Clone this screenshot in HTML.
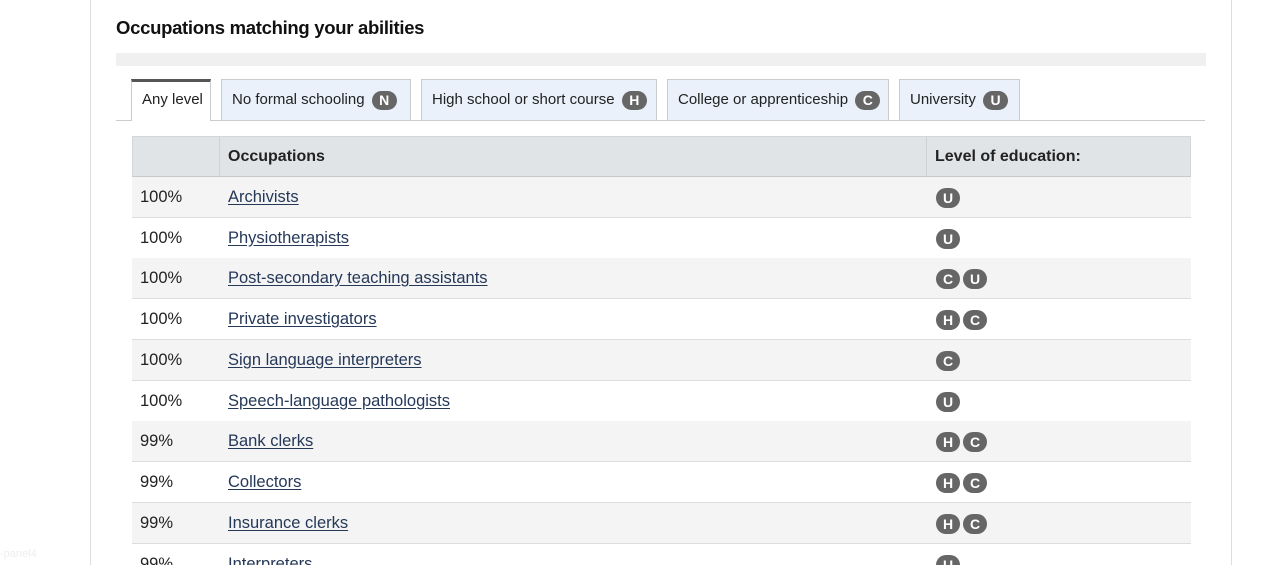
<!DOCTYPE html>
<html><head><meta charset="utf-8"><style>
*{box-sizing:border-box;margin:0;padding:0}
html,body{width:1274px;height:565px;overflow:hidden}
body{background:#fff;font-family:"Liberation Sans",sans-serif;color:#222;position:relative}
.card{position:absolute;left:90px;top:-2px;width:1142px;height:567px;border-left:1px solid #ddd;border-right:1px solid #ddd}
h2{position:absolute;left:116px;top:17px;font-size:18.5px;font-weight:bold;color:#111;letter-spacing:-0.3px}
.bar{position:absolute;left:116px;top:53px;width:1090px;height:13px;background:#f0f0f0}
.tabline{position:absolute;left:116px;top:120px;width:1089px;height:1px;background:#ccc}
.tab{position:absolute;top:79px;height:41px;border:1px solid #ccc;border-bottom:none;background:#eaf1fb;font-size:15px;line-height:40px;padding-left:10px;white-space:nowrap}
.tab.act{background:#fff;border-top:3px solid #555;line-height:36px;height:42px}
.b{display:inline-block;width:25px;height:19px;border-radius:10px;background:#666;color:#fff;font-weight:bold;font-style:normal;font-size:14px;line-height:19px;text-align:center;vertical-align:middle;margin-left:3px}
.thead{position:absolute;left:132px;top:136px;width:1059px;height:41px;background:#e1e4e7;border:1px solid #d4d7da;border-bottom:1px solid #c8c8c8;font-weight:bold;font-size:16px}
.thead div{position:absolute;top:0;height:39px;line-height:39px;border-left:1px solid #cfd2d5;padding-left:8px}
.row{position:absolute;left:132px;width:1059px;height:41px;border-bottom:1px solid #ddd;font-size:16.5px}
.row.g{background:#f4f4f4}
.row span{position:absolute;top:0;line-height:40px}
.row a{color:#253858;text-decoration:underline;text-underline-offset:2px}
.row .bs{left:804px;top:11px;line-height:normal}
.row .b{margin:0 3px 0 0;width:24px;height:20px;line-height:20px}
.ghost{position:absolute;left:0;top:548px;font-size:11px;color:#eee}
</style></head><body>
<div class="card"></div>
<h2>Occupations matching your abilities</h2>
<div class="bar"></div>
<div class="tabline"></div>
<div class="tab act" style="left:131px;width:80px">Any level</div>
<div class="tab" style="left:221px;width:190px">No formal schooling <span class="b">N</span></div>
<div class="tab" style="left:421px;width:236px">High school or short course <span class="b">H</span></div>
<div class="tab" style="left:667px;width:222px">College or apprenticeship <span class="b">C</span></div>
<div class="tab" style="left:899px;width:121px">University <span class="b">U</span></div>
<div class="thead"><div style="left:86px;width:707px">Occupations</div><div style="left:793px;width:264px">Level of education:</div></div>
<div class="row g" style="top:177px"><span style="left:8px">100%</span><span style="left:96px"><a>Archivists</a></span><span class="bs"><i class="b">U</i></span></div>
<div class="row" style="top:218px"><span style="left:8px">100%</span><span style="left:96px"><a>Physiotherapists</a></span><span class="bs"><i class="b">U</i></span></div>
<div class="row g" style="top:258px"><span style="left:8px">100%</span><span style="left:96px"><a>Post-secondary teaching assistants</a></span><span class="bs"><i class="b">C</i><i class="b">U</i></span></div>
<div class="row" style="top:299px"><span style="left:8px">100%</span><span style="left:96px"><a>Private investigators</a></span><span class="bs"><i class="b">H</i><i class="b">C</i></span></div>
<div class="row g" style="top:340px"><span style="left:8px">100%</span><span style="left:96px"><a>Sign language interpreters</a></span><span class="bs"><i class="b">C</i></span></div>
<div class="row" style="top:381px"><span style="left:8px">100%</span><span style="left:96px"><a>Speech-language pathologists</a></span><span class="bs"><i class="b">U</i></span></div>
<div class="row g" style="top:421px"><span style="left:8px">99%</span><span style="left:96px"><a>Bank clerks</a></span><span class="bs"><i class="b">H</i><i class="b">C</i></span></div>
<div class="row" style="top:462px"><span style="left:8px">99%</span><span style="left:96px"><a>Collectors</a></span><span class="bs"><i class="b">H</i><i class="b">C</i></span></div>
<div class="row g" style="top:503px"><span style="left:8px">99%</span><span style="left:96px"><a>Insurance clerks</a></span><span class="bs"><i class="b">H</i><i class="b">C</i></span></div>
<div class="row" style="top:544px"><span style="left:8px">99%</span><span style="left:96px"><a>Interpreters</a></span><span class="bs"><i class="b">U</i></span></div>
<div class="ghost">-panel4</div>
</body></html>
